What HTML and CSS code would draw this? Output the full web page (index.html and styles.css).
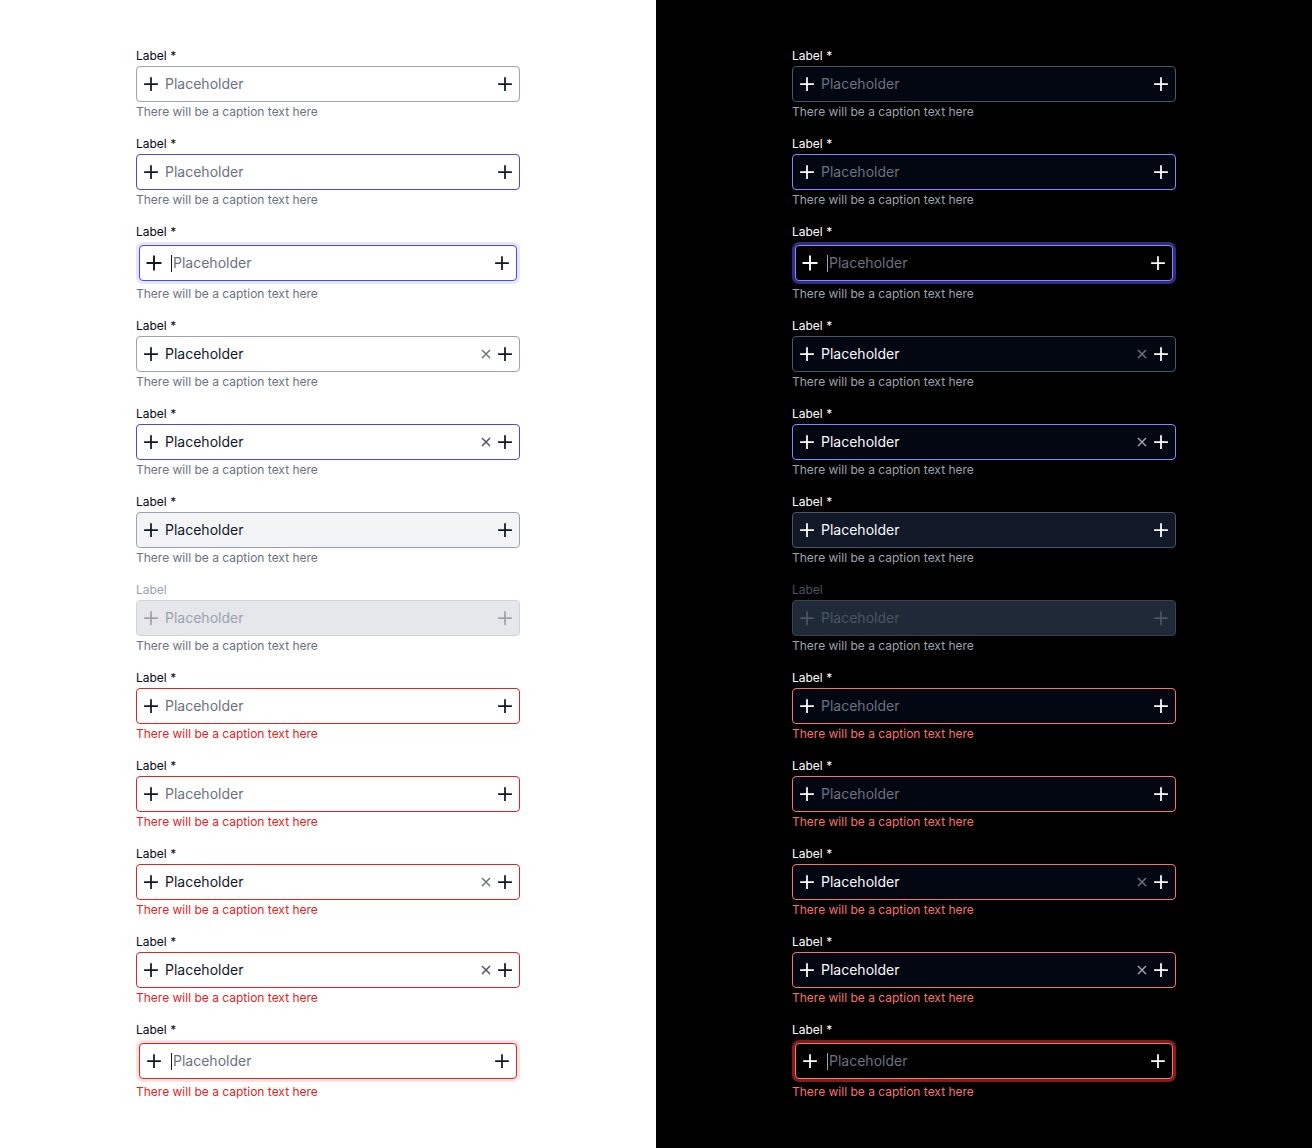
FILE: index.html
```html
<!DOCTYPE html>
<html lang="en">
<head>
<meta charset="utf-8">
<title>Input fields</title>
<link rel="stylesheet" href="styles.css">
</head>
<body>
<main class="page">
  <section class="panel light">
    <div class="field"><div class="label">Label *</div><div class="ring"><div class="box"><svg class="ico" viewBox="0 0 20 20"><path d="M10 4v12M4 10h12"/></svg><span class="text ph">Placeholder</span><svg class="ico" viewBox="0 0 20 20"><path d="M10 4v12M4 10h12"/></svg></div></div><div class="caption">There will be a caption text here</div></div>
    <div class="field hover"><div class="label">Label *</div><div class="ring"><div class="box"><svg class="ico" viewBox="0 0 20 20"><path d="M10 4v12M4 10h12"/></svg><span class="text ph">Placeholder</span><svg class="ico" viewBox="0 0 20 20"><path d="M10 4v12M4 10h12"/></svg></div></div><div class="caption">There will be a caption text here</div></div>
    <div class="field focus"><div class="label">Label *</div><div class="ring"><div class="box"><svg class="ico big" viewBox="0 0 20 20"><path d="M10 3.5v13M3.5 10h13"/></svg><span class="cursor"></span><span class="text ph">Placeholder</span><svg class="ico" viewBox="0 0 20 20"><path d="M10 4v12M4 10h12"/></svg></div></div><div class="caption">There will be a caption text here</div></div>
    <div class="field"><div class="label">Label *</div><div class="ring"><div class="box"><svg class="ico" viewBox="0 0 20 20"><path d="M10 4v12M4 10h12"/></svg><span class="text val">Placeholder</span><svg class="ico clear" viewBox="0 0 20 20"><path d="M6 6l8 8M14 6l-8 8"/></svg><svg class="ico" viewBox="0 0 20 20"><path d="M10 4v12M4 10h12"/></svg></div></div><div class="caption">There will be a caption text here</div></div>
    <div class="field hover"><div class="label">Label *</div><div class="ring"><div class="box"><svg class="ico" viewBox="0 0 20 20"><path d="M10 4v12M4 10h12"/></svg><span class="text val">Placeholder</span><svg class="ico clear" viewBox="0 0 20 20"><path d="M6 6l8 8M14 6l-8 8"/></svg><svg class="ico" viewBox="0 0 20 20"><path d="M10 4v12M4 10h12"/></svg></div></div><div class="caption">There will be a caption text here</div></div>
    <div class="field filled"><div class="label">Label *</div><div class="ring"><div class="box"><svg class="ico" viewBox="0 0 20 20"><path d="M10 4v12M4 10h12"/></svg><span class="text val">Placeholder</span><svg class="ico" viewBox="0 0 20 20"><path d="M10 4v12M4 10h12"/></svg></div></div><div class="caption">There will be a caption text here</div></div>
    <div class="field disabled"><div class="label">Label</div><div class="ring"><div class="box"><svg class="ico" viewBox="0 0 20 20"><path d="M10 4v12M4 10h12"/></svg><span class="text ph">Placeholder</span><svg class="ico" viewBox="0 0 20 20"><path d="M10 4v12M4 10h12"/></svg></div></div><div class="caption">There will be a caption text here</div></div>
    <div class="field error"><div class="label">Label *</div><div class="ring"><div class="box"><svg class="ico" viewBox="0 0 20 20"><path d="M10 4v12M4 10h12"/></svg><span class="text ph">Placeholder</span><svg class="ico" viewBox="0 0 20 20"><path d="M10 4v12M4 10h12"/></svg></div></div><div class="caption">There will be a caption text here</div></div>
    <div class="field error"><div class="label">Label *</div><div class="ring"><div class="box"><svg class="ico" viewBox="0 0 20 20"><path d="M10 4v12M4 10h12"/></svg><span class="text ph">Placeholder</span><svg class="ico" viewBox="0 0 20 20"><path d="M10 4v12M4 10h12"/></svg></div></div><div class="caption">There will be a caption text here</div></div>
    <div class="field error"><div class="label">Label *</div><div class="ring"><div class="box"><svg class="ico" viewBox="0 0 20 20"><path d="M10 4v12M4 10h12"/></svg><span class="text val">Placeholder</span><svg class="ico clear" viewBox="0 0 20 20"><path d="M6 6l8 8M14 6l-8 8"/></svg><svg class="ico" viewBox="0 0 20 20"><path d="M10 4v12M4 10h12"/></svg></div></div><div class="caption">There will be a caption text here</div></div>
    <div class="field error hover"><div class="label">Label *</div><div class="ring"><div class="box"><svg class="ico" viewBox="0 0 20 20"><path d="M10 4v12M4 10h12"/></svg><span class="text val">Placeholder</span><svg class="ico clear" viewBox="0 0 20 20"><path d="M6 6l8 8M14 6l-8 8"/></svg><svg class="ico" viewBox="0 0 20 20"><path d="M10 4v12M4 10h12"/></svg></div></div><div class="caption">There will be a caption text here</div></div>
    <div class="field error focus"><div class="label">Label *</div><div class="ring"><div class="box"><svg class="ico" viewBox="0 0 20 20"><path d="M10 4v12M4 10h12"/></svg><span class="cursor"></span><span class="text ph">Placeholder</span><svg class="ico" viewBox="0 0 20 20"><path d="M10 4v12M4 10h12"/></svg></div></div><div class="caption">There will be a caption text here</div></div>
  </section>

  <section class="panel dark">
    <div class="field"><div class="label">Label *</div><div class="ring"><div class="box"><svg class="ico" viewBox="0 0 20 20"><path d="M10 4v12M4 10h12"/></svg><span class="text ph">Placeholder</span><svg class="ico" viewBox="0 0 20 20"><path d="M10 4v12M4 10h12"/></svg></div></div><div class="caption">There will be a caption text here</div></div>
    <div class="field hover"><div class="label">Label *</div><div class="ring"><div class="box"><svg class="ico" viewBox="0 0 20 20"><path d="M10 4v12M4 10h12"/></svg><span class="text ph">Placeholder</span><svg class="ico" viewBox="0 0 20 20"><path d="M10 4v12M4 10h12"/></svg></div></div><div class="caption">There will be a caption text here</div></div>
    <div class="field focus"><div class="label">Label *</div><div class="ring"><div class="box"><svg class="ico big" viewBox="0 0 20 20"><path d="M10 3.5v13M3.5 10h13"/></svg><span class="cursor"></span><span class="text ph">Placeholder</span><svg class="ico" viewBox="0 0 20 20"><path d="M10 4v12M4 10h12"/></svg></div></div><div class="caption">There will be a caption text here</div></div>
    <div class="field"><div class="label">Label *</div><div class="ring"><div class="box"><svg class="ico" viewBox="0 0 20 20"><path d="M10 4v12M4 10h12"/></svg><span class="text val">Placeholder</span><svg class="ico clear" viewBox="0 0 20 20"><path d="M6 6l8 8M14 6l-8 8"/></svg><svg class="ico" viewBox="0 0 20 20"><path d="M10 4v12M4 10h12"/></svg></div></div><div class="caption">There will be a caption text here</div></div>
    <div class="field hover"><div class="label">Label *</div><div class="ring"><div class="box"><svg class="ico" viewBox="0 0 20 20"><path d="M10 4v12M4 10h12"/></svg><span class="text val">Placeholder</span><svg class="ico clear" viewBox="0 0 20 20"><path d="M6 6l8 8M14 6l-8 8"/></svg><svg class="ico" viewBox="0 0 20 20"><path d="M10 4v12M4 10h12"/></svg></div></div><div class="caption">There will be a caption text here</div></div>
    <div class="field filled"><div class="label">Label *</div><div class="ring"><div class="box"><svg class="ico" viewBox="0 0 20 20"><path d="M10 4v12M4 10h12"/></svg><span class="text val">Placeholder</span><svg class="ico" viewBox="0 0 20 20"><path d="M10 4v12M4 10h12"/></svg></div></div><div class="caption">There will be a caption text here</div></div>
    <div class="field disabled"><div class="label">Label</div><div class="ring"><div class="box"><svg class="ico" viewBox="0 0 20 20"><path d="M10 4v12M4 10h12"/></svg><span class="text ph">Placeholder</span><svg class="ico" viewBox="0 0 20 20"><path d="M10 4v12M4 10h12"/></svg></div></div><div class="caption">There will be a caption text here</div></div>
    <div class="field error"><div class="label">Label *</div><div class="ring"><div class="box"><svg class="ico" viewBox="0 0 20 20"><path d="M10 4v12M4 10h12"/></svg><span class="text ph">Placeholder</span><svg class="ico" viewBox="0 0 20 20"><path d="M10 4v12M4 10h12"/></svg></div></div><div class="caption">There will be a caption text here</div></div>
    <div class="field error"><div class="label">Label *</div><div class="ring"><div class="box"><svg class="ico" viewBox="0 0 20 20"><path d="M10 4v12M4 10h12"/></svg><span class="text ph">Placeholder</span><svg class="ico" viewBox="0 0 20 20"><path d="M10 4v12M4 10h12"/></svg></div></div><div class="caption">There will be a caption text here</div></div>
    <div class="field error"><div class="label">Label *</div><div class="ring"><div class="box"><svg class="ico" viewBox="0 0 20 20"><path d="M10 4v12M4 10h12"/></svg><span class="text val">Placeholder</span><svg class="ico clear" viewBox="0 0 20 20"><path d="M6 6l8 8M14 6l-8 8"/></svg><svg class="ico" viewBox="0 0 20 20"><path d="M10 4v12M4 10h12"/></svg></div></div><div class="caption">There will be a caption text here</div></div>
    <div class="field error hover"><div class="label">Label *</div><div class="ring"><div class="box"><svg class="ico" viewBox="0 0 20 20"><path d="M10 4v12M4 10h12"/></svg><span class="text val">Placeholder</span><svg class="ico clear" viewBox="0 0 20 20"><path d="M6 6l8 8M14 6l-8 8"/></svg><svg class="ico" viewBox="0 0 20 20"><path d="M10 4v12M4 10h12"/></svg></div></div><div class="caption">There will be a caption text here</div></div>
    <div class="field error focus"><div class="label">Label *</div><div class="ring"><div class="box"><svg class="ico" viewBox="0 0 20 20"><path d="M10 4v12M4 10h12"/></svg><span class="cursor"></span><span class="text ph">Placeholder</span><svg class="ico" viewBox="0 0 20 20"><path d="M10 4v12M4 10h12"/></svg></div></div><div class="caption">There will be a caption text here</div></div>
  </section>
</main>
</body>
</html>
```

FILE: styles.css
```css
* { box-sizing: border-box; }

html, body {
  margin: 0;
  padding: 0;
}

body {
  font-family: Inter, "Noto Sans", "Liberation Sans", sans-serif;
  -webkit-font-smoothing: antialiased;
}

.page {
  display: grid;
  grid-template-columns: 656px 656px;
  min-height: 1148px;
}

.panel {
  display: flex;
  flex-direction: column;
  gap: 16px;
  padding: 48px 0 0 136px;
}

.field {
  width: 384px;
  display: flex;
  flex-direction: column;
  gap: 2px;
}

.label {
  font-size: 12px;
  line-height: 16px;
  font-weight: 400;
}

.caption {
  font-size: 12px;
  line-height: 16px;
}

.ring {
  border-radius: 7px;
}

.box {
  height: 36px;
  border: 1px solid;
  border-radius: 4px;
  display: flex;
  align-items: center;
  padding: 0 4px;
  gap: 4px;
}

.ico {
  width: 20px;
  height: 20px;
  flex: none;
  fill: none;
  stroke: currentColor;
  stroke-width: 1.75;
  stroke-linecap: square;
}

.ico.big { stroke-width: 1.9; }

.ico.clear {
  stroke-width: 1.5;
  stroke-linecap: butt;
  margin-right: -5px;
}

.text {
  flex: 1;
  font-size: 14px;
  line-height: 20px;
  white-space: nowrap;
}

.cursor {
  width: 1px;
  height: 17px;
  flex: none;
  margin-left: 3px;
  margin-right: -3px;
}

.focus .ring {
  padding: 3px;
}

/* ---------- light ---------- */
.light { background: #ffffff; }
.light .label { color: #030712; }
.light .caption { color: #6b7280; }
.light .box { border-color: #9ca3af; background: #ffffff; color: #111827; }
.light .ph { color: #6b7280; }
.light .val { color: #111827; }
.light .clear { color: #6b7280; }
.light .cursor { background: #111827; }

.light .hover .box { border-color: #4f46e5; }
.light .hover .clear { color: #4b5563; }
.light .focus .ring { background: #e0e7ff; }
.light .focus .box { border-color: #4f46e5; }

.light .filled .box { background: #f3f4f6; }

.light .disabled .label { color: #9ca3af; }
.light .disabled .box { background: #e5e7eb; border-color: #d1d5db; color: #9ca3af; }
.light .disabled .ph { color: #9ca3af; }

.light .error .box { border-color: #dc2626; }
.light .error .caption { color: #dc2626; }
.light .error.focus .ring { background: #fee2e2; }

/* ---------- dark ---------- */
.dark { background: #000000; }
.dark .label { color: #ffffff; }
.dark .caption { color: #9ca3af; }
.dark .box { border-color: #4b5563; background: #030712; color: #ffffff; }
.dark .ph { color: #6b7280; }
.dark .val { color: #f9fafb; }
.dark .clear { color: #6b7280; }
.dark .cursor { background: #9ca3af; }

.dark .hover .box { border-color: #818cf8; }
.dark .hover .clear { color: #9ca3af; }
.dark .focus .ring { background: #312e81; }
.dark .focus .box { border-color: #818cf8; background: #000000; }

.dark .filled .box { background: #111827; }

.dark .disabled .label { color: #4b5563; }
.dark .disabled .box { background: #1f2937; border-color: #374151; color: #4b5563; }
.dark .disabled .ph { color: #4b5563; }

.dark .error .box { border-color: #f87171; }
.dark .error .caption { color: #f87171; }
.dark .error.focus .ring { background: #7f1d1d; }
```
